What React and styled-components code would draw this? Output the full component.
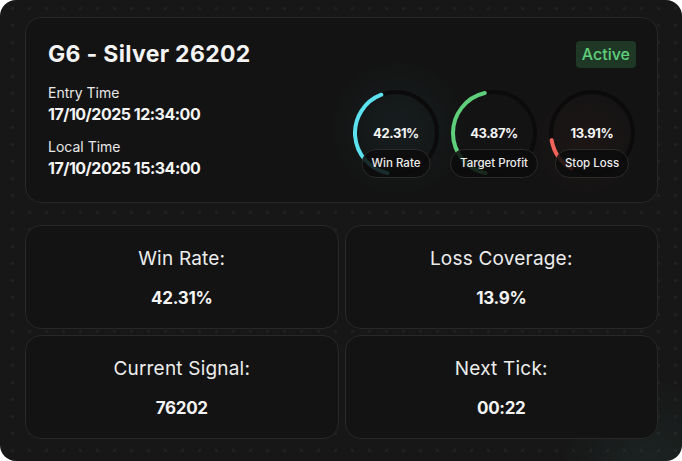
import React from "react";
import styled, { createGlobalStyle } from "styled-components";

const GlobalStyle = createGlobalStyle`
  html, body {
    margin: 0;
    padding: 0;
    background: #ffffff;
  }
  body {
    font-family: "Inter", "Noto Sans", sans-serif;
    color: #f2f2f2;
  }
`;

const Shell = styled.div`
  width: 682px;
  height: 461px;
  box-sizing: border-box;
  padding: 17px 24px 22px 25px;
  border-radius: 16px;
  overflow: hidden;
  background-color: #171717;
  background-image:
    radial-gradient(circle at 650px 470px, rgba(60, 130, 120, 0.12), transparent 90px),
    radial-gradient(circle, #202020 1.5px, transparent 1.7px);
  background-size: 100% 100%, 17px 17px;
  background-position: 0 0, 4px 0px;
`;

const Card = styled.div`
  box-sizing: border-box;
  border: 1px solid #282828;
  border-radius: 16px;
  background-color: #131313;
`;

const Header = styled(Card)`
  height: 186px;
  padding: 19px 21px 0 22px;
  background-image:
    radial-gradient(circle at 372px 110px, rgba(70, 170, 190, 0.07), transparent 70px),
    radial-gradient(circle at 560px 125px, rgba(200, 70, 60, 0.06), transparent 60px);
`;

const TopRow = styled.div`
  display: flex;
  justify-content: space-between;
  align-items: center;
`;

const Title = styled.h1`
  margin: 0;
  font-size: 23px;
  line-height: 34px;
  font-weight: 700;
  letter-spacing: 0.3px;
  color: #f4f4f4;
`;

const Badge = styled.span`
  padding: 3px 6px;
  border-radius: 4px;
  background: #1f3826;
  color: #5fcf7c;
  font-size: 16px;
  line-height: 21px;
  font-weight: 500;
`;

const BodyRow = styled.div`
  display: flex;
  justify-content: space-between;
  align-items: flex-start;
`;

const Times = styled.div`
  display: flex;
  flex-direction: column;
  padding-top: 12px;
`;

const TimeLabel = styled.span`
  font-size: 14px;
  line-height: 20px;
  color: #e8e8e8;
  margin-top: ${(p) => (p.first ? "0" : "12px")};
`;

const TimeValue = styled.span`
  font-size: 16px;
  line-height: 22px;
  font-weight: 700;
  letter-spacing: -0.5px;
  color: #f4f4f4;
`;

const Gauges = styled.div`
  display: flex;
  gap: 12px;
  margin-top: 19px;
  margin-right: 1px;
`;

const GaugeBox = styled.div`
  position: relative;
  width: 86px;
  height: 86px;
`;

const GaugeValue = styled.span`
  position: absolute;
  left: 0;
  right: 0;
  top: 33px;
  text-align: center;
  font-size: 13px;
  line-height: 20px;
  font-weight: 700;
  letter-spacing: -0.4px;
  color: #f4f4f4;
`;

const Pill = styled.span`
  position: absolute;
  left: 50%;
  top: 59px;
  transform: translateX(-50%);
  box-sizing: border-box;
  height: 29px;
  padding: 0 9px;
  border-radius: 15px;
  border: 1px solid #2a2a2a;
  background: rgba(12, 12, 12, 0.85);
  white-space: nowrap;
  font-size: 11.5px;
  line-height: 27px;
  font-weight: 500;
  color: #ededed;
`;

const Grid = styled.div`
  display: grid;
  grid-template-columns: 1fr 1fr;
  gap: 6px;
  margin-top: 22px;
`;

const StatCard = styled(Card)`
  height: 104px;
  display: flex;
  flex-direction: column;
  align-items: center;
  padding-top: 20px;
`;

const StatLabel = styled.span`
  font-size: 19px;
  line-height: 26px;
  color: #ececec;
  letter-spacing: 0.2px;
`;

const StatValue = styled.span`
  margin-top: 13px;
  font-size: 17px;
  line-height: 26px;
  font-weight: 700;
  letter-spacing: -0.3px;
  color: #f4f4f4;
`;

const R = 41;
const C = 43;

function point(deg) {
  const t = (deg * Math.PI) / 180;
  return [C - R * Math.sin(t), C - R * Math.cos(t)];
}

// angles in degrees, counter-clockwise from 12 o'clock
function arcPath(from, to) {
  const [x1, y1] = point(to);
  const [x2, y2] = point(from);
  const large = to - from > 180 ? 1 : 0;
  return `M ${x1} ${y1} A ${R} ${R} 0 ${large} 1 ${x2} ${y2}`;
}

const Gauge = ({ value, label, color, from, to }) => (
  <GaugeBox>
    <svg width="86" height="86" viewBox="0 0 86 86">
      <circle cx={C} cy={C} r={R} fill="none" stroke="#0b0b0b" strokeWidth="4" />
      <path d={arcPath(from, to)} fill="none" stroke={color} strokeWidth="4" strokeLinecap="round" />
    </svg>
    <GaugeValue>{value}</GaugeValue>
    <Pill>{label}</Pill>
  </GaugeBox>
);

const gauges = [
  { value: "42.31%", label: "Win Rate", color: "#5ce1ee", from: 21, to: 168 },
  { value: "43.87%", label: "Target Profit", color: "#5fcf7c", from: 13, to: 168 },
  { value: "13.91%", label: "Stop Loss", color: "#f2645a", from: 100, to: 150 },
];

const stats = [
  { label: "Win Rate:", value: "42.31%" },
  { label: "Loss Coverage:", value: "13.9%" },
  { label: "Current Signal:", value: "76202" },
  { label: "Next Tick:", value: "00:22" },
];

export default function App() {
  return (
    <>
      <GlobalStyle />
      <Shell>
        <Header>
          <TopRow>
            <Title>G6 - Silver 26202</Title>
            <Badge>Active</Badge>
          </TopRow>
          <BodyRow>
            <Times>
              <TimeLabel first>Entry Time</TimeLabel>
              <TimeValue>17/10/2025 12:34:00</TimeValue>
              <TimeLabel>Local Time</TimeLabel>
              <TimeValue>17/10/2025 15:34:00</TimeValue>
            </Times>
            <Gauges>
              {gauges.map((g) => (
                <Gauge key={g.label} {...g} />
              ))}
            </Gauges>
          </BodyRow>
        </Header>
        <Grid>
          {stats.map((s) => (
            <StatCard key={s.label}>
              <StatLabel>{s.label}</StatLabel>
              <StatValue>{s.value}</StatValue>
            </StatCard>
          ))}
        </Grid>
      </Shell>
    </>
  );
}
